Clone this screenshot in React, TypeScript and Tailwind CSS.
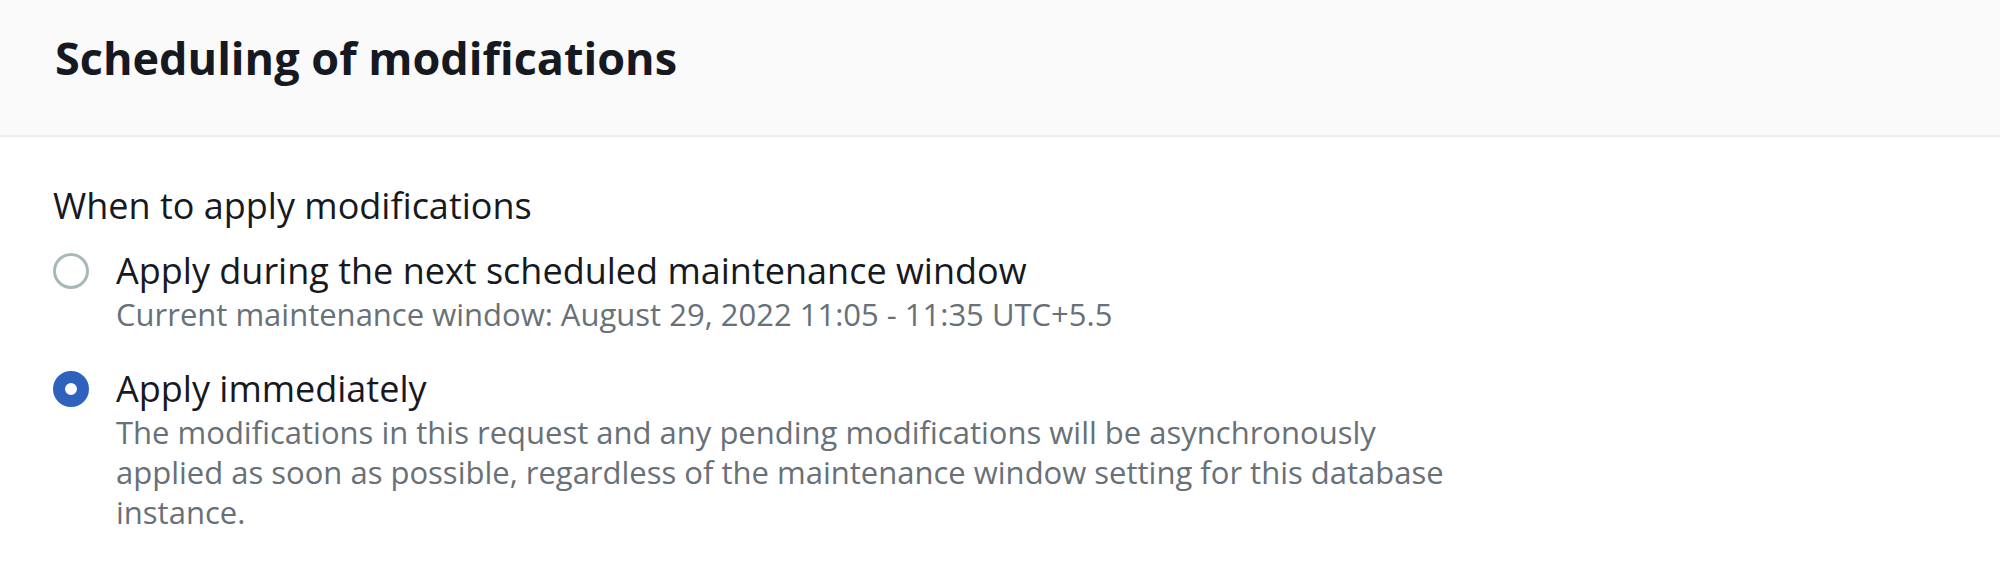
import { useState } from 'react';

type Option = {
  value: string;
  label: string;
  description: string;
};

const options: Option[] = [
  {
    value: 'next-window',
    label: 'Apply during the next scheduled maintenance window',
    description: 'Current maintenance window: August 29, 2022 11:05 - 11:35 UTC+5.5',
  },
  {
    value: 'immediately',
    label: 'Apply immediately',
    description:
      'The modifications in this request and any pending modifications will be asynchronously applied as soon as possible, regardless of the maintenance window setting for this database instance.',
  },
];

const RadioOption = ({ option, checked, onSelect }: { option: Option; checked: boolean; onSelect: () => void }) => (
  <label className="flex cursor-pointer items-start gap-[27px]" onClick={onSelect}>
    <span
      className={
        checked
          ? 'mt-[7px] h-[36px] w-[36px] shrink-0 rounded-full border-[12px] border-[#2e62bd] bg-white'
          : 'mt-[7px] h-[36px] w-[36px] shrink-0 rounded-full border-[3px] border-[#aab7b8] bg-white'
      }
    />
    <span className="flex flex-col">
      <span className="text-[36px] leading-[50px] text-[#16191f]">{option.label}</span>
      <span className="-mt-[2px] max-w-[1345px] text-[31px] leading-[40px] text-[#687078]">{option.description}</span>
    </span>
  </label>
);

export default function App() {
  const [selected, setSelected] = useState('immediately');

  return (
    <div className="min-h-[577px] w-[2000px] bg-white font-['Open_Sans',sans-serif] text-[#16191f]">
      {/* header */}
      <div className="h-[137px] border-b-2 border-[#eaeded] bg-[#fafafa] pl-[55px] pt-[30px]">
        <h2 className="text-[45px] font-bold leading-[55px]">Scheduling of modifications</h2>
      </div>

      <div className="pl-[53px] pt-[44px]">
        <div className="text-[36px] leading-[50px]">When to apply modifications</div>
        <div role="radiogroup" className="mt-[15px] flex flex-col gap-[30px]">
          {options.map((o) => (
            <RadioOption key={o.value} option={o} checked={selected === o.value} onSelect={() => setSelected(o.value)} />
          ))}
        </div>
      </div>
    </div>
  );
}
